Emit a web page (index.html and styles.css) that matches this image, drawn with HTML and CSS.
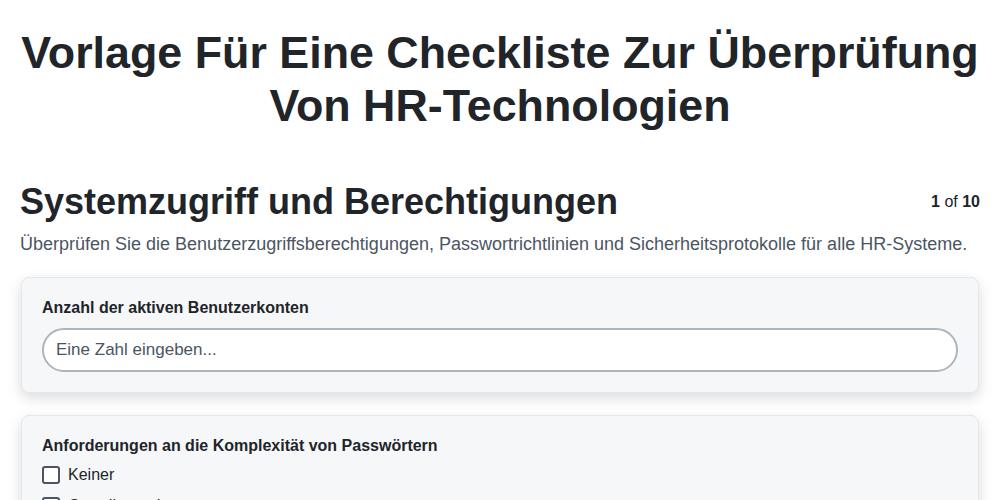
FILE: index.html
```html
<!DOCTYPE html>
<html lang="de">
<head>
<meta charset="utf-8">
<title>Checkliste</title>
<link rel="stylesheet" href="styles.css">
</head>
<body>
<main class="page">
  <h1 class="title">Vorlage Für Eine Checkliste Zur Überprüfung Von HR-Technologien</h1>
  <section class="section">
    <div class="section-head">
      <h2 class="section-title">Systemzugriff und Berechtigungen</h2>
      <div class="pager"><b>1</b> of <b>10</b></div>
    </div>
    <p class="section-desc">Überprüfen Sie die Benutzerzugriffsberechtigungen, Passwortrichtlinien und Sicherheitsprotokolle für alle HR-Systeme.</p>
    <div class="card">
      <label class="label" for="n1">Anzahl der aktiven Benutzerkonten</label>
      <input id="n1" class="input" type="text" placeholder="Eine Zahl eingeben...">
    </div>
    <div class="card">
      <div class="label label-group">Anforderungen an die Komplexität von Passwörtern</div>
      <label class="check"><span class="box"></span><span>Keiner</span></label>
      <label class="check"><span class="box"></span><span>Grundlegend</span></label>
      <label class="check"><span class="box"></span><span>Mittel</span></label>
    </div>
  </section>
</main>
</body>
</html>
```

FILE: styles.css
```css
* { box-sizing: border-box; }
html, body { margin: 0; padding: 0; background: #ffffff; }
body {
  font-family: "Liberation Sans", Arial, sans-serif;
  color: #212529;
}
.page {
  padding: 0 20px;
}
.title {
  margin: 26px -4px 0;
  text-align: center;
  font-size: 44.8px;
  line-height: 53px;
  font-weight: 700;
  color: #212529;
}
.section { margin-top: 48px; }
.section-head {
  display: flex;
  justify-content: space-between;
  align-items: center;
}
.section-title {
  margin: 0;
  font-size: 36px;
  line-height: 44px;
  font-weight: 700;
}
.pager {
  font-size: 16px;
  color: #212529;
}
.section-desc {
  margin: 8px 0 21px;
  font-size: 18px;
  line-height: 24px;
  color: #4b5563;
}
.card {
  background: #f6f7f9;
  border: 1px solid #e5e7eb;
  border-radius: 8px;
  box-shadow: 0 5px 14px rgba(0,0,0,0.14);
  padding: 20px 20px 20px;
  margin: 0 1px 22px;
}
.label {
  display: block;
  font-weight: 700;
  font-size: 16px;
  line-height: 20px;
  margin-bottom: 10px;
  color: #212529;
}
.label-group { margin-bottom: 9px; }
.input {
  display: block;
  width: 100%;
  height: 44px;
  border: 2px solid #adb5bd;
  border-radius: 22px;
  background: #fff;
  padding: 0 12px;
  font-family: "Liberation Sans", Arial, sans-serif;
  font-size: 17px;
  color: #212529;
}
.input::placeholder { color: #4b5563; }
.check {
  display: flex;
  align-items: center;
  gap: 8px;
  font-size: 16px;
  line-height: 20px;
  margin-bottom: 11px;
}
.box {
  width: 18px;
  height: 18px;
  border: 2px solid #4b5563;
  border-radius: 3px;
  background: #fff;
}
```
